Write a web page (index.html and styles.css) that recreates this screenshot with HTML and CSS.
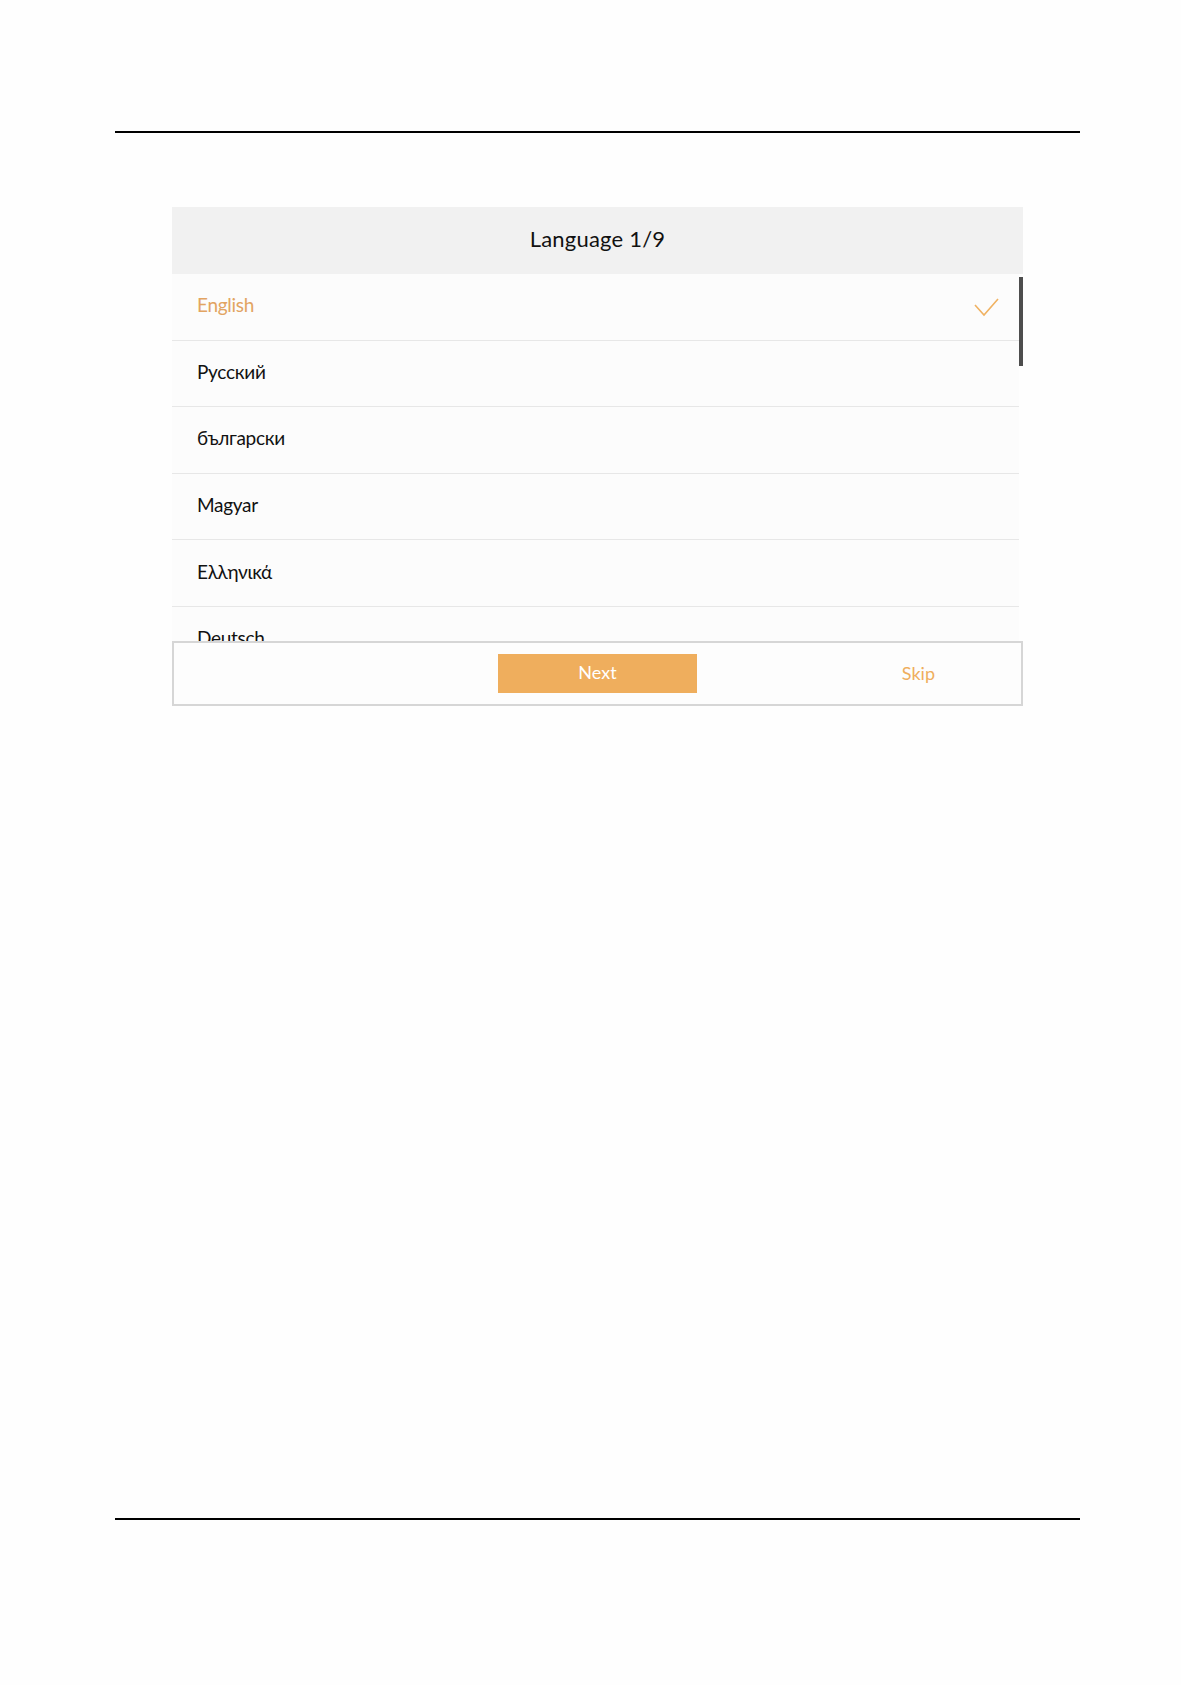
FILE: index.html
```html
<!DOCTYPE html>
<html>
<head>
<meta charset="utf-8">
<title>Language</title>
<link rel="stylesheet" href="styles.css">
</head>
<body>
<div class="rule rule_top"></div>

<div class="card">
   <div class="card_head">Language 1/9</div>
   <div class="list">
      <ul class="rows">
         <li class="selected">English
            <svg class="tick" width="26" height="20" viewBox="0 0 26 20"><polyline points="1,7 10,17 24,1" fill="none" stroke="#f0b262" stroke-width="1.6"/></svg>
         </li>
         <li>Русский</li>
         <li>български</li>
         <li>Magyar</li>
         <li>Ελληνικά</li>
         <li>Deutsch</li>
      </ul>
      <div class="track"><div class="thumb"></div></div>
   </div>
   <div class="card_foot">
      <span></span>
      <a class="btn_next">Next</a>
      <a class="btn_skip">Skip</a>
   </div>
</div>

<div class="rule rule_bottom"></div>
</body>
</html>
```

FILE: styles.css
```css
*{margin:0;padding:0;box-sizing:border-box;}
li{list-style:none;}
body{background:#fefefe;font-family:Lato,"Noto Sans",sans-serif;color:#111;min-height:1685px;}

.rule{height:2px;background:#000;margin:0 101px 0 115px;}
.rule_top{margin-top:131px;}
.rule_bottom{margin-top:812px;}

.card{width:851px;margin:74px 0 0 172px;}
.card_head{height:67px;background:#f1f1f1;display:flex;align-items:center;justify-content:center;font-size:22px;letter-spacing:0.2px;padding-bottom:4px;}

.list{height:367px;overflow:hidden;display:flex;}
.rows{flex:1;}
.rows li{height:66.6px;border-bottom:1px solid #e7e7e7;background:#fcfcfc;display:flex;align-items:center;justify-content:space-between;padding:0 19px 4px 25px;font-size:19px;letter-spacing:-0.3px;}
.rows li.selected{color:#e2a462;}
.tick{margin-top:6px;}
.track{width:4px;padding-top:3px;}
.thumb{height:89px;background:#4d4d4d;}

.card_foot{height:65px;border:2px solid #d6d6d6;background:#fdfdfd;display:grid;grid-template-columns:1fr 199px 1fr;align-items:center;}
.btn_next{height:39px;background:#efae5d;color:#fff;font-size:18px;display:flex;align-items:center;justify-content:center;padding-bottom:3px;cursor:pointer;}
.btn_skip{justify-self:end;margin-right:86px;margin-bottom:2px;color:#efae5d;font-size:18px;cursor:pointer;}
```
